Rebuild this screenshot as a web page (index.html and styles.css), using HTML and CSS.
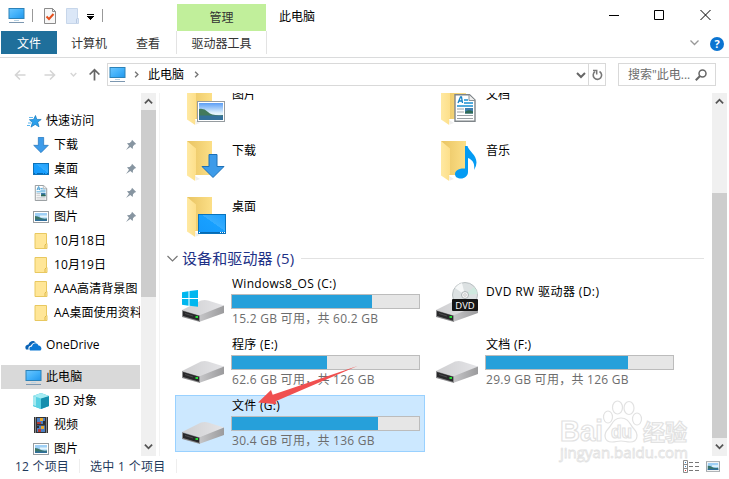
FILE: index.html
```html
<!DOCTYPE html>
<html lang="zh-CN">
  <head>
    <meta charset="UTF-8" />
    <meta name="viewport" content="width=device-width, initial-scale=1.0" />
    <title>此电脑</title>
    <link rel="stylesheet" href="styles.css" />
  </head>
  <body>
    <!-- shared icons -->
    <svg class="sprite" aria-hidden="true">
      <defs>
        <linearGradient id="screen" x1="0" y1="0" x2="1" y2="1">
          <stop offset="0" stop-color="#6cc6ff" />
          <stop offset="0.5" stop-color="#43b2fa" />
          <stop offset="1" stop-color="#2196ec" />
        </linearGradient>
        <linearGradient id="desk" x1="0" y1="1" x2="1" y2="0">
          <stop offset="0" stop-color="#1599fb" />
          <stop offset="0.55" stop-color="#18a0ff" />
          <stop offset="0.56" stop-color="#35adff" />
          <stop offset="1" stop-color="#1e9ffc" />
        </linearGradient>
        <linearGradient id="folderBack" x1="0" y1="0" x2="1" y2="0">
          <stop offset="0" stop-color="#e9c462" />
          <stop offset="1" stop-color="#fcdf87" />
        </linearGradient>
        <linearGradient id="folderFront" x1="0" y1="0" x2="1" y2="0">
          <stop offset="0" stop-color="#ffe9a2" />
          <stop offset="1" stop-color="#fddf8a" />
        </linearGradient>
        <linearGradient id="sky" x1="0" y1="0" x2="0" y2="1">
          <stop offset="0" stop-color="#5b9ef5" />
          <stop offset="0.6" stop-color="#e4f4fc" />
        </linearGradient>
        <linearGradient id="driveTop" x1="0" y1="0" x2="1" y2="0">
          <stop offset="0" stop-color="#cfcfd1" />
          <stop offset="1" stop-color="#e4e4e7" />
        </linearGradient>
        <linearGradient id="driveSide" x1="0" y1="0" x2="1" y2="0">
          <stop offset="0" stop-color="#c6c6c8" />
          <stop offset="1" stop-color="#9b9b9d" />
        </linearGradient>
      </defs>

      <symbol id="pc" viewBox="0 0 17 17">
        <rect x="1" y="1.5" width="15" height="10" fill="url(#screen)" stroke="#2c82b8" />
        <path d="M6 13.5h5" stroke="#b9d3e4" />
        <path d="M1 15.5h15" stroke="#7c97b0" />
      </symbol>
      <symbol id="chevron" viewBox="0 0 10 10">
        <path d="M1 3l4 4 4-4" fill="none" stroke="currentColor" stroke-width="2" />
      </symbol>
      <symbol id="arrow" viewBox="0 0 12 12">
        <path d="M11.500 6H1.500M6 1.500L1.500 6 6 10.500" fill="none" stroke="currentColor" stroke-width="1.600" />
      </symbol>
      <symbol id="pin" viewBox="0 0 12 12">
        <path d="M7 .800L11.200 5 9.700 5.500 8 7.300 7.700 10 5.300 8 1 11 4 6.700 2 4.300 4.700 4 6.500 2.300z" fill="#8795a1" />
      </symbol>
      <symbol id="star" viewBox="0 0 15 13">
        <path d="M8.500 0.500l1.300 3.900 4.400.1-3.500 2.600 1.300 4.700-3.800-2.400-4.200 2.700 1.400-4.500-3-2.900 4.100-.2z" fill="#2ca0ec" stroke="#1278bd" stroke-width=".7" />
        <path d="M2 2.500h4M1 8h3M0 10.500h3" stroke="#5db6ee" />
      </symbol>
      <symbol id="down" viewBox="0 0 24 24">
        <path d="M8 .500h8v12h7L12 23.500 1 12.500h7z" fill="#3d9be9" stroke="#1c70b8" />
      </symbol>
      <symbol id="desktop" viewBox="0 0 16 12">
        <rect x=".5" y=".5" width="15" height="11" fill="url(#desk)" stroke="#0e72b8" />
        <path d="M1 10.500h1M4 10.500h6M11 10.500h1M14 10.500h1" stroke="#066ab3" />
      </symbol>
      <symbol id="doc" viewBox="0 0 22 28">
        <path d="M1 .800h14.500L21 6v21.200H1z" fill="#fff" stroke="#7f8589" stroke-width="1.400" />
        <path d="M15 1v5.500h6" fill="#eee" stroke="#8b9195" />
        <path d="M4 9l2.500-6h1L8.500 9M5 7h3" fill="none" stroke="#1682c4" stroke-width="1.300" />
        <path d="M10 6h4M10 9h9M3 12h16" stroke="#1a8fd1" stroke-width="1.300" />
        <path d="M3 15h7M3 18h7M3 21.500h16M3 24.500h16" stroke="#9aa0a4" />
        <path d="M11 14h8v5.500h-8z" fill="#3e7dae" />
        <path d="M11 18q3-3 8-.5v2h-8z" fill="#2f6b55" />
      </symbol>
      <symbol id="picture" viewBox="0 0 28 21">
        <rect x=".5" y=".5" width="27" height="20" fill="#fff" stroke="#969ca0" />
        <rect x="2" y="2" width="24" height="17" fill="url(#sky)" />
        <path d="M2 8q5-1 9 3t15 3v1H2z" fill="#437a5c" />
        <path d="M2 14.500h24V19H2z" fill="#33719b" />
      </symbol>
      <symbol id="smallPicture" viewBox="0 0 16 12">
        <rect x=".5" y=".5" width="15" height="11" fill="#fff" stroke="#969ca0" />
        <rect x="2" y="2" width="12" height="8" fill="#9fd0f6" />
        <path d="M7 4.500h7v2H7z" fill="#e6f6fc" />
        <path d="M2 5q3 0 5 1.500t7 1V10H2z" fill="#3b7568" />
        <path d="M2 8.500h12V10H2z" fill="#2f6f9d" />
      </symbol>
      <symbol id="folder" viewBox="0 0 13 16">
        <path d="M.500 .500h11.500v10h.5v5H.500z" fill="#ffe697" stroke="#e8c860" />
        <path d="M10.500 15v-3l1.500-1.500" fill="none" stroke="#dfb94a" />
      </symbol>
      <symbol id="bigFolder" viewBox="0 0 26 40">
        <path d="M0 0h25v34H5z" fill="url(#folderBack)" />
        <path d="M9 39.500l4-1.500-5-3z" fill="#eee" />
        <path d="M0 0l9 7.500V33l-.8 1v6L0 34.500z" fill="url(#folderFront)" />
      </symbol>
      <symbol id="note" viewBox="0 0 22 33">
        <path d="M10 0h2.500c1 5 9 8.500 9 16.500q0 4-2.500 7.500c1-6-1-10-6-12V26c0 4-3.500 6.500-7 6.500S0 31 0 28s3.500-6 10-5.500z" fill="#049bf3" />
      </symbol>
      <symbol id="cloud" viewBox="0 0 17 11">
        <path d="M1 9.500C-1 6 2 4.500 3.500 4.500 4.500 1 8.500-.500 11 2.500 8 2.500 6.500 4 6 5.500 3.500 6 3 8 3.700 9.500z" fill="#0a62b5" />
        <path d="M5 10.500C3.500 8 5 6.500 7 6.500c.5-3.500 5-4.500 6.500-1 2.500 0 4 3.500 2 5z" fill="#0c78d4" />
      </symbol>
      <symbol id="cube" viewBox="0 0 16 16">
        <path d="M0 3l8-3 8 3v10l-8 3-8-3z" fill="#36bfd6" />
        <path d="M0 3l8 2v11l-8-3z" fill="#58d1e3" />
        <path d="M8 5l8-2v10l-8 3z" fill="#158fae" />
        <path d="M0 3l8-3 8 3-8 2.500z" fill="#a5ecf3" />
        <path d="M3 4v9l-3-1V3z" fill="#a3e8ef" />
      </symbol>
      <symbol id="film" viewBox="0 0 14 16">
        <path d="M0 0h14v16H0z" fill="#333" />
        <path d="M1.500 .500v15M12.500 .500v15" stroke="#ddd" stroke-dasharray="1 1" />
        <path d="M3 1h8v6H3zM3 8.500h8v6.500H3z" fill="#4a7fc4" />
        <path d="M6 1h3v3H6zM7 9h3v3H7z" fill="#e9a92e" />
        <path d="M3 5h4v2H3zM4 12h3v3H4z" fill="#b33b34" />
        <path d="M9 4h2v3H9zM3 9h2v2H3z" fill="#26303c" />
      </symbol>
      <symbol id="drive" viewBox="0 0 42 22">
        <path d="M0 10L19 .500q4-1 7 0l16 5L20 16z" fill="url(#driveTop)" />
        <path d="M17 15.500L42 5.500V13L17 22z" fill="url(#driveSide)" />
        <path d="M0 10l18 5.500V22L0 17z" fill="#8c8c8e" />
        <path d="M1 11l16 4.800v4.900L1 16z" fill="#28282a" />
        <path d="M3 13.500l8 2.500" stroke="#4a4a4c" />
        <rect x="13.500" y="16" width="2.500" height="2" fill="#25d936" />
      </symbol>
    </svg>

    <div class="window">
      <header class="titlebar">
        <div class="quick-bar">
          <svg width="17" height="17"><use href="#pc" /></svg>
          <i class="sep"></i>
          <svg class="check" width="12" height="16" viewBox="0 0 12 16">
            <path d="M.500 .500h8l3 3v12h-11z" fill="#f7f7f7" stroke="#8b8b8b" />
            <path d="M8.500 .500v3h3" fill="none" stroke="#8b8b8b" />
            <path d="M2.500 8.500L5 11l4.500-5" fill="none" stroke="#e4501e" stroke-width="2" />
          </svg>
          <svg class="blank" width="13" height="16" viewBox="0 0 13 16">
            <path d="M.500 .500h11v9l1 1v5H.500z" fill="#dbe7f7" stroke="#c7d6ea" />
            <path d="M10.500 15v-4l1.500-1" fill="none" stroke="#b9cae2" />
          </svg>
          <svg class="more" width="7" height="6" viewBox="0 0 7 6">
            <path d="M0 .500h7M0 2.500h7M1 3.500h5M2 4.500h3M3 5.500h1" stroke="#000" />
          </svg>
          <i class="sep"></i>
        </div>
        <div class="context">管理</div>
        <div class="title">此电脑</div>
        <svg class="window-buttons" width="102" height="12" viewBox="0 0 102 12">
          <path d="M0 6.500h10M45.500 1.500h9v9h-9zM91.500 1l10 10M101.500 1l-10 10" fill="none" stroke="#000" />
        </svg>
      </header>

      <nav class="tabs">
        <a class="tab file">文件</a>
        <a class="tab computer">计算机</a>
        <a class="tab view">查看</a>
        <a class="tab tools">驱动器工具</a>
        <svg class="collapse" width="9" height="9" viewBox="0 0 9 9">
          <path d="M.500 2.500l4 4 4-4" fill="none" stroke="#999" stroke-width="1.300" />
        </svg>
        <span class="help">?</span>
      </nav>

      <div class="address-row">
        <svg class="nav-icon back" width="12" height="12"><use href="#arrow" /></svg>
        <svg class="nav-icon forward" width="12" height="12"><use href="#arrow" /></svg>
        <svg class="nav-icon recent" width="7" height="7"><use href="#chevron" /></svg>
        <svg class="nav-icon up" width="13" height="13"><use href="#arrow" /></svg>
        <div class="address">
          <svg width="17" height="17"><use href="#pc" /></svg>
          <svg class="crumb first" width="7" height="7"><use href="#chevron" /></svg>
          <span>此电脑</span>
          <svg class="crumb" width="7" height="7"><use href="#chevron" /></svg>
          <svg class="drop" width="10" height="10"><use href="#chevron" /></svg>
          <div class="refresh">
            <svg width="11" height="12" viewBox="0 0 11 12">
              <path d="M7.500 2.500a4.200 4.200 0 1 1-4.500.2" fill="none" stroke="#777" stroke-width="1.600" />
              <path d="M1 1.500h3.700v4" fill="none" stroke="#777" stroke-width="1.500" />
            </svg>
          </div>
        </div>
        <div class="search">
          <span>搜索"此电...</span>
          <svg width="12" height="12" viewBox="0 0 12 12">
            <circle cx="7.500" cy="4.500" r="3.500" fill="none" stroke="#666" stroke-width="1.500" />
            <path d="M5 7L.800 11.200" stroke="#666" stroke-width="2" />
          </svg>
        </div>
      </div>

      <div class="body">
        <aside class="sidebar">
          <div class="tree">
            <div class="item root"><svg width="15" height="13"><use href="#star" /></svg>快速访问</div>
            <div class="item"><svg width="16" height="16"><use href="#down" /></svg>下载<svg class="pin" width="12" height="12"><use href="#pin" /></svg></div>
            <div class="item"><svg width="16" height="12"><use href="#desktop" /></svg>桌面<svg class="pin" width="12" height="12"><use href="#pin" /></svg></div>
            <div class="item"><svg width="16" height="16"><use href="#doc" /></svg>文档<svg class="pin" width="12" height="12"><use href="#pin" /></svg></div>
            <div class="item"><svg width="16" height="12"><use href="#smallPicture" /></svg>图片<svg class="pin" width="12" height="12"><use href="#pin" /></svg></div>
            <div class="item"><svg width="16" height="16"><use href="#folder" /></svg>10月18日</div>
            <div class="item"><svg width="16" height="16"><use href="#folder" /></svg>10月19日</div>
            <div class="item"><svg width="16" height="16"><use href="#folder" /></svg>AAA高清背景图</div>
            <div class="item"><svg width="16" height="16"><use href="#folder" /></svg>AA桌面使用资料</div>
            <div class="item root onedrive"><svg width="17" height="11"><use href="#cloud" /></svg>OneDrive</div>
            <div class="item root active"><svg width="17" height="17"><use href="#pc" /></svg>此电脑</div>
            <div class="item"><svg width="16" height="16"><use href="#cube" /></svg>3D 对象</div>
            <div class="item"><svg width="16" height="16"><use href="#film" /></svg>视频</div>
            <div class="item"><svg width="16" height="12"><use href="#smallPicture" /></svg>图片</div>
          </div>
          <div class="scrollbar">
            <svg class="up" width="9" height="9"><use href="#chevron" /></svg>
            <div class="thumb side-thumb"></div>
            <svg class="down" width="9" height="9"><use href="#chevron" /></svg>
          </div>
        </aside>

        <main class="content">
          <div class="folders">
            <div class="folder">
              <div class="folder-icon"><svg width="26" height="40"><use href="#bigFolder" /></svg><svg class="badge pic" width="28" height="21"><use href="#picture" /></svg></div>
              <span>图片</span>
            </div>
            <div class="folder">
              <div class="folder-icon"><svg width="26" height="40"><use href="#bigFolder" /></svg><svg class="badge text" width="22" height="28"><use href="#doc" /></svg></div>
              <span>文档</span>
            </div>
            <div class="folder">
              <div class="folder-icon"><svg width="26" height="40"><use href="#bigFolder" /></svg><svg class="badge load" width="24" height="24"><use href="#down" /></svg></div>
              <span>下载</span>
            </div>
            <div class="folder">
              <div class="folder-icon"><svg width="26" height="40"><use href="#bigFolder" /></svg><svg class="badge music" width="22" height="33"><use href="#note" /></svg></div>
              <span>音乐</span>
            </div>
            <div class="folder">
              <div class="folder-icon"><svg width="26" height="40"><use href="#bigFolder" /></svg><svg class="badge desk" width="28" height="20" viewBox="0 0 28 20">
                <rect x=".5" y=".5" width="27" height="19" fill="url(#desk)" stroke="#0873bd" />
                <path d="M1 18.500h26" stroke="#066ab3" />
                <path d="M1 18.500h1M22 18.500h1M24 18.500h1M26 18.500h1" stroke="#fff" />
              </svg></div>
              <span>桌面</span>
            </div>
          </div>

          <div class="group">
            <svg width="11" height="11" viewBox="0 0 11 11"><path d="M.500 3l5 5 5-5" fill="none" stroke="#777" stroke-width="1.200" /></svg>
            <h2>设备和驱动器 (5)</h2>
          </div>

          <div class="drives">
            <div class="drive">
              <div class="drive-icon">
                <svg width="42" height="22"><use href="#drive" /></svg>
                <svg class="winlogo" width="16" height="17" viewBox="0 0 16 17"><path d="M0 2.200l6.500-1V8H0zM7.500 1L16 0v8H7.500zM0 9h6.500v6.700L0 14.800zM7.500 9H16v7.800l-8.500-1z" fill="#00b7ef" /></svg>
              </div>
              <div class="info">
                <p class="name">Windows8_OS (C:)</p>
                <div class="bar"><div class="used" style="width: 140px"></div></div>
                <p class="space">15.2 GB 可用，共 60.2 GB</p>
              </div>
            </div>
            <div class="drive dvd">
              <div class="drive-icon">
                <svg width="42" height="22"><use href="#drive" /></svg>
                <svg class="disc" width="26" height="29" viewBox="0 0 26 29">
                  <circle cx="13" cy="13" r="12.500" fill="#dce1e2" stroke="#b9bfc1" />
                  <path d="M13 13L3 6q3-4 7-5z" fill="#f6f8f8" />
                  <path d="M13 13l9-8q3 3 3.500 7z" fill="#cfe9df" />
                  <circle cx="13" cy="13" r="3.500" fill="#f5f5f5" stroke="#aeb4b6" />
                  <circle cx="13" cy="13" r="1.300" fill="#fff" stroke="#aaa" stroke-width=".6" />
                  <rect y="17" width="26" height="12" rx="1" fill="#161616" />
                  <text x="13" y="26.500" text-anchor="middle" class="disc-label">DVD</text>
                </svg>
              </div>
              <div class="info"><p class="name">DVD RW 驱动器 (D:)</p></div>
            </div>
            <div class="drive">
              <div class="drive-icon"><svg width="42" height="22"><use href="#drive" /></svg></div>
              <div class="info">
                <p class="name">程序 (E:)</p>
                <div class="bar"><div class="used" style="width: 95px"></div></div>
                <p class="space">62.6 GB 可用，共 126 GB</p>
              </div>
            </div>
            <div class="drive">
              <div class="drive-icon"><svg width="42" height="22"><use href="#drive" /></svg></div>
              <div class="info">
                <p class="name">文档 (F:)</p>
                <div class="bar"><div class="used" style="width: 142px"></div></div>
                <p class="space">29.9 GB 可用，共 126 GB</p>
              </div>
            </div>
            <div class="drive selected">
              <div class="drive-icon"><svg width="42" height="22"><use href="#drive" /></svg></div>
              <div class="info">
                <p class="name">文件 (G:)</p>
                <div class="bar"><div class="used" style="width: 146px"></div></div>
                <p class="space">30.4 GB 可用，共 136 GB</p>
              </div>
            </div>
          </div>
        </main>

        <div class="scrollbar main-scroll">
          <svg class="up" width="9" height="9"><use href="#chevron" /></svg>
          <div class="thumb main-thumb"></div>
          <svg class="down" width="9" height="9"><use href="#chevron" /></svg>
        </div>
      </div>

      <footer class="status">
        <span class="count">12 个项目</span>
        <span class="picked">选中 1 个项目</span>
        <svg class="details" width="16" height="13" viewBox="0 0 16 13">
          <path d="M.500 .500h4v12h-4zM.500 4.500h4M.500 8.500h4" fill="none" stroke="#8b8b8b" />
          <path d="M6 2.500h4M12 2.500h4M6 6.500h4M12 6.500h4M6 10.500h4M12 10.500h4" stroke="#777" />
          <path d="M2 2.500h1M2 6.500h1" stroke="#3583c4" /><path d="M2 10.500h1" stroke="#d33" />
        </svg>
        <svg class="tiles" width="14" height="11"><use href="#smallPicture" /></svg>
      </footer>
    </div>

    <svg class="pointer" width="101" height="40" viewBox="0 0 101 40">
      <path d="M1 37.500L14 25l1.700 4.700L100.500 1 18.700 36.300l.8 3z" fill="#f04f4f" />
    </svg>

    <svg class="watermark" width="136" height="66" viewBox="0 0 136 66">
      <text x="3" y="43" class="brand" textLength="43" lengthAdjust="spacingAndGlyphs">Bai</text>
      <path d="M64 20c8 0 9 7 13 11s5 13-4 13c-4 0-5-1-9-1s-5 1-9 1c-9 0-8-9-4-13s5-11 13-11z" />
      <ellipse cx="51" cy="19" rx="4.500" ry="6" />
      <ellipse cx="60.500" cy="9.500" rx="5" ry="6.500" />
      <ellipse cx="72" cy="10" rx="5" ry="6.500" />
      <ellipse cx="80" cy="21" rx="4.500" ry="6" />
      <text x="54" y="40" class="du" textLength="21" lengthAdjust="spacingAndGlyphs">du</text>
      <text x="86" y="42" class="exp">经验</text>
      <text x="3" y="60" class="site" textLength="128" lengthAdjust="spacingAndGlyphs">jingyan.baidu.com</text>
    </svg>
  </body>
</html>
```
FILE: styles.css
```css
* {
  box-sizing: border-box;
}
body {
  margin: 0;
  width: 729px;
  height: 479px;
  overflow: hidden;
  position: relative;
  background: #fff;
  color: #000;
  font-family: 'Open Sans', 'Noto Sans CJK SC', sans-serif;
  font-size: 12px;
  line-height: 18px;
}
svg {
  display: block;
  flex: none;
}
p,
h2 {
  margin: 0;
  font-weight: normal;
}
.sprite {
  position: absolute;
  width: 0;
  height: 0;
}
.window {
  display: flex;
  flex-direction: column;
  height: 479px;
}

/* title bar */
.titlebar {
  display: flex;
  height: 31px;
}
.quick-bar {
  display: flex;
  align-items: center;
  width: 177px;
  padding-left: 8px;
}
.sep {
  width: 1px;
  height: 13px;
  margin-left: 7px;
  background: #999;
}
.check {
  margin-left: 11px;
}
.blank {
  margin-left: 10px;
}
.more {
  margin-left: 8px;
  margin-top: 3px;
}
.more + .sep {
  margin-left: 8px;
}
.context {
  width: 89px;
  margin-top: 4px;
  background: #c1ef9b;
  color: #333;
  line-height: 27px;
  text-align: center;
}
.title {
  margin-left: 13px;
  line-height: 33px;
}
.window-buttons {
  margin-left: auto;
  margin-right: 18px;
  margin-top: 9px;
}

/* ribbon tabs */
.tabs {
  display: flex;
  align-items: center;
  height: 27px;
  padding-left: 1px;
  padding-bottom: 3px;
  border-bottom: 1px solid #dadbdc;
  color: #333;
}
.tab {
  height: 23px;
  line-height: 25px;
  text-align: center;
}
.file {
  width: 56px;
  background: #1f6f9b;
  color: #fff;
}
.computer {
  width: 64px;
}
.view {
  width: 54px;
}
.tools {
  width: 91px;
  margin-left: 1px;
  border: solid #e3e3e3;
  border-width: 0 1px;
}
.collapse {
  margin-left: auto;
}
.help {
  width: 14px;
  height: 14px;
  margin: 2px 5px 0 11px;
  border-radius: 50%;
  background: #0b74d1;
  color: #fff;
  font-size: 11px;
  font-weight: bold;
  line-height: 14px;
  text-align: center;
}

/* address bar */
.address-row {
  display: flex;
  align-items: center;
  height: 35px;
  padding: 0 13px 2px 14px;
}
.nav-icon {
  color: #d5d5d5;
}
.forward {
  margin-left: 18px;
  transform: scaleX(-1);
}
.recent {
  margin-left: 14px;
}
.nav-icon.up {
  margin-left: 11px;
  margin-right: 6px;
  color: #666;
  transform: rotate(90deg);
}
.address {
  display: flex;
  align-items: center;
  width: 499px;
  height: 23px;
  padding-left: 1px;
  border: 1px solid #d9d9d9;
}
.crumb {
  margin-left: 9px;
  color: #777;
  transform: rotate(-90deg);
}
.crumb.first {
  margin-left: 7px;
  margin-right: 8px;
}
.drop {
  margin-left: auto;
  margin-right: 2px;
  color: #666;
}
.refresh {
  display: flex;
  align-items: center;
  justify-content: center;
  width: 17px;
  height: 21px;
  border-left: 1px solid #d9d9d9;
}
.search {
  display: flex;
  align-items: center;
  justify-content: space-between;
  width: 98px;
  height: 23px;
  margin-left: 12px;
  padding: 0 8px 0 9px;
  border: 1px solid #d9d9d9;
  color: #6d6d6d;
}

/* body */
.body {
  display: flex;
  height: 363px;
  overflow: hidden;
}
.sidebar {
  display: flex;
  width: 160px;
  border-right: 1px solid #f3f3f3;
}
.tree {
  width: 140px;
  height: 363px;
  margin-right: 1px;
  padding: 16px 0 0 1px;
  overflow: hidden;
}
.item {
  display: flex;
  align-items: center;
  gap: 5px;
  height: 24px;
  padding-left: 32px;
  white-space: nowrap;
  letter-spacing: 0.1px;
}
.item.root {
  padding-left: 26px;
  gap: 4px;
}
.item .pin {
  margin-left: auto;
  margin-right: 3px;
}
.item.onedrive {
  margin-top: 8px;
  padding-left: 24px;
}
.item.active {
  margin-top: 8px;
  padding-left: 24px;
  background: #d9d9d9;
}
.scrollbar {
  display: flex;
  flex-direction: column;
  align-items: center;
  width: 15px;
  height: 363px;
  background: #f0f0f0;
  color: #555;
}
.scrollbar .up {
  margin: 4px 0;
  transform: scaleY(-1);
}
.scrollbar .down {
  margin-top: auto;
  margin-bottom: 5px;
}
.thumb {
  width: 15px;
  background: #cdcdcd;
}
.side-thumb {
  height: 187px;
}
.main-thumb {
  height: 245px;
  margin-top: 83px;
}
.main-scroll {
  margin-right: 2px;
}
.content {
  flex: 1;
  height: 363px;
  padding-left: 15px;
  overflow: hidden;
}

/* folders scrolled partly under the address bar */
.folders {
  display: grid;
  grid-template-columns: 254px 254px;
  grid-auto-rows: 56px;
  margin-top: -8px;
}
.folder {
  display: flex;
  padding-left: 12px;
  line-height: 20px;
}
.folder-icon {
  position: relative;
  width: 45px;
  height: 40px;
}
.badge {
  position: absolute;
}
.pic {
  left: 10px;
  top: 16px;
}
.text {
  left: 13px;
  top: 9px;
}
.load {
  left: 14px;
  top: 13px;
}
.music {
  left: 14px;
  top: 5px;
}
.desk {
  left: 11px;
  top: 17px;
}

.group {
  display: flex;
  align-items: center;
  gap: 4px;
  height: 20px;
  margin: -5px 8px 5px -8px;
  color: #1e3287;
}
.group h2 {
  font-size: 15px;
  letter-spacing: 0.1px;
}
.group::after {
  content: '';
  flex: 1;
  height: 1px;
  margin-left: 3px;
  background: #e2e2e2;
}

/* drives */
.drives {
  display: grid;
  grid-template-columns: 250px 250px;
  grid-auto-rows: 57px;
  gap: 4px;
}
.drive {
  display: flex;
  border: 1px solid transparent;
  padding-left: 6px;
}
.drive.selected {
  border-color: #99d1ff;
  background: #cce8ff;
}
.drive-icon {
  position: relative;
  width: 49px;
  padding-top: 26px;
}
.winlogo {
  position: absolute;
  left: 0;
  top: 16px;
}
.disc {
  position: absolute;
  left: 16px;
  top: 8px;
}
.disc-label {
  fill: #fff;
  font-size: 9.5px;
}
.info {
  width: 189px;
  letter-spacing: 0.27px;
}
.name {
  height: 20px;
  line-height: 20px;
  padding-left: 1px;
}
.dvd .name {
  padding-top: 8px;
  letter-spacing: 0.4px;
}
.bar {
  height: 15px;
  border: 1px solid #bcbcbc;
  background: #e6e6e6;
}
.used {
  height: 13px;
  background: #26a0da;
}
.space {
  padding-left: 1px;
  line-height: 20px;
  color: #6d6d6d;
}

/* status bar */
.status {
  display: flex;
  align-items: center;
  height: 20px;
  padding: 0 9px 0 15px;
  color: #1e395b;
}
.count,
.picked {
  height: 14px;
  line-height: 15px;
  padding-right: 10px;
  border-right: 1px solid #eee;
  letter-spacing: 0.2px;
}
.picked {
  margin-left: 10px;
  letter-spacing: 0.3px;
}
.details {
  margin-left: auto;
}
.tiles {
  margin-left: 7px;
}

/* overlays */
.pointer {
  position: absolute;
  left: 257px;
  top: 365px;
}
.watermark {
  position: absolute;
  left: 557px;
  top: 398px;
  fill: #fff;
  stroke: #e2e2e2;
  stroke-width: 1.2px;
}
.brand,
.du {
  font-family: 'Liberation Sans', sans-serif;
  font-weight: bold;
  font-size: 29px;
}
.du {
  font-size: 19px;
}
.exp {
  font-weight: bold;
  font-size: 22px;
}
.site {
  font-size: 15px;
  stroke-width: 0.8px;
}
```
